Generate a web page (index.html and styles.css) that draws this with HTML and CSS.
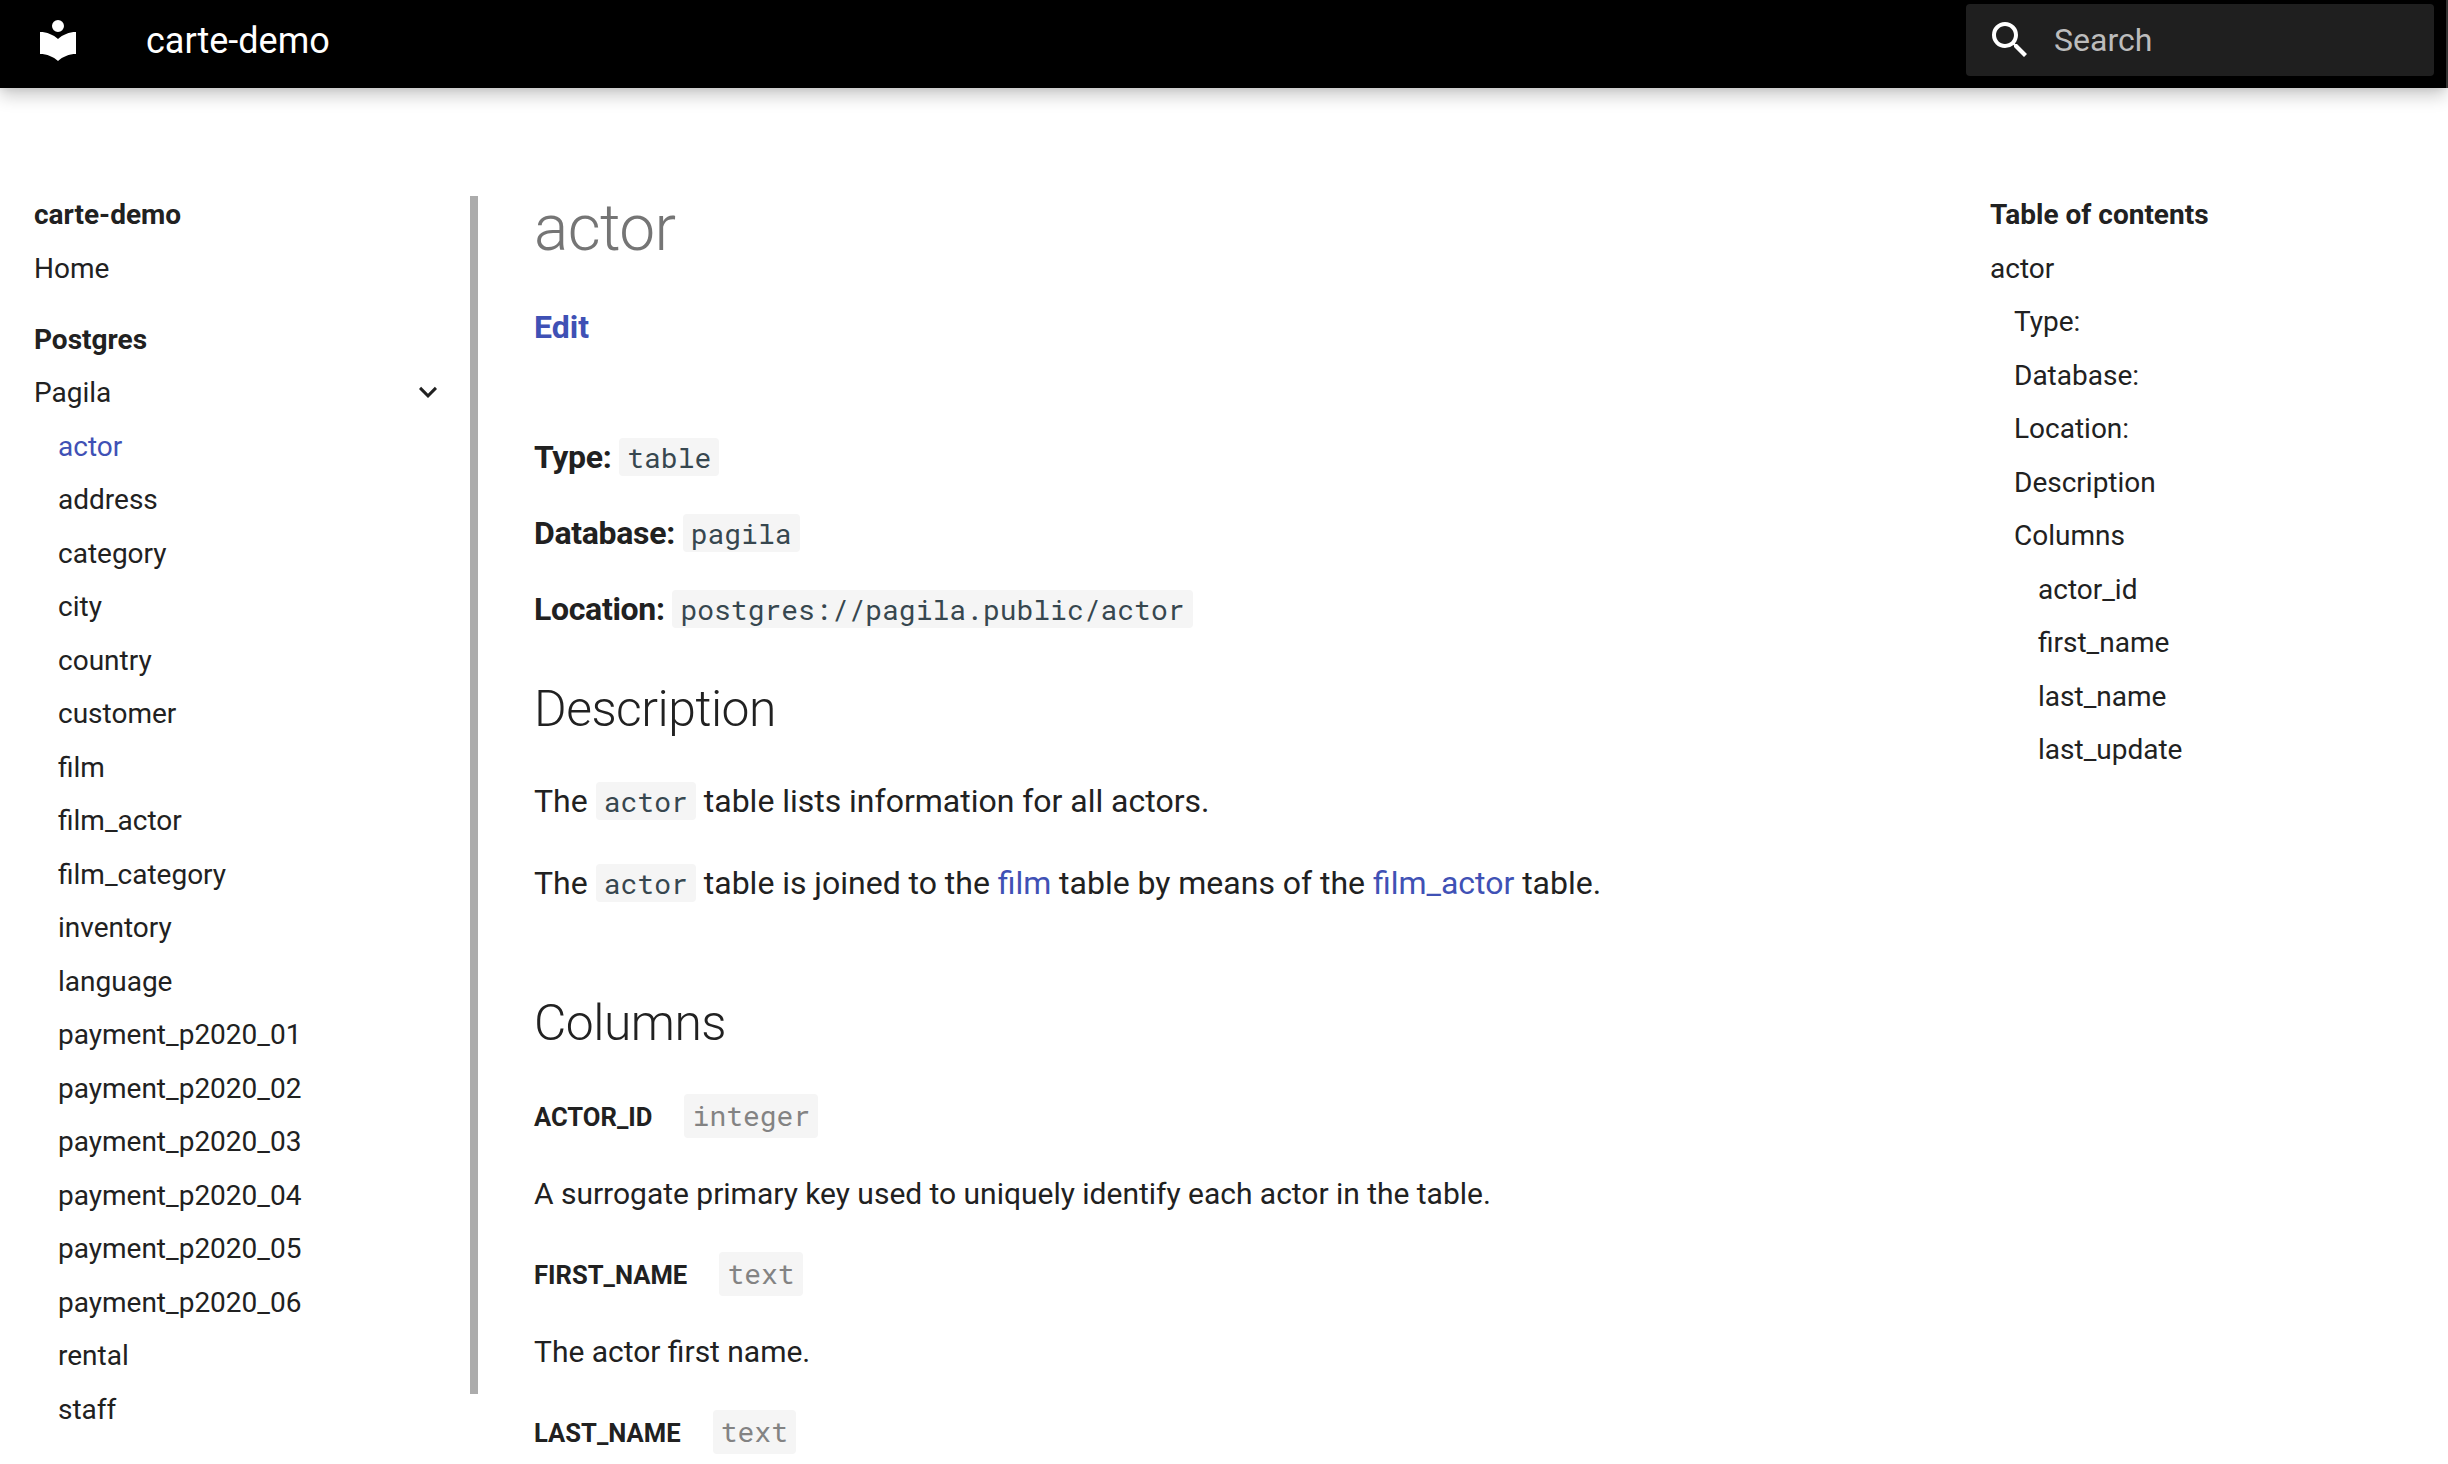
FILE: index.html
```html
<!DOCTYPE html>
<html lang="en">
<head>
<meta charset="utf-8">
<title>actor - carte-demo</title>
<link rel="stylesheet" href="styles.css">
</head>
<body>
<div class="top">
  <header class="header">
    <svg class="icon" viewBox="0 0 24 24"><path d="M12 8a3 3 0 0 0 3-3 3 3 0 0 0-3-3 3 3 0 0 0-3 3 3 3 0 0 0 3 3m0 3.54C9.64 9.35 6.5 8 3 8v11c3.5 0 6.64 1.35 9 3.54 2.36-2.19 5.5-3.54 9-3.54V8c-3.5 0-6.64 1.35-9 3.54Z"/></svg>
    <span class="header-title">carte-demo</span>
    <div class="search">
      <svg class="icon" viewBox="0 0 24 24"><path d="M9.5 3A6.5 6.5 0 0 1 16 9.5c0 1.61-.59 3.09-1.56 4.23l.27.27h.79l5 5-1.5 1.5-5-5v-.79l-.27-.27A6.516 6.516 0 0 1 9.5 16 6.5 6.5 0 0 1 3 9.5 6.5 6.5 0 0 1 9.5 3m0 2C7 5 5 7 5 9.5S7 14 9.5 14 14 12 14 9.5 12 5 9.5 5Z"/></svg>
      <span class="search-label">Search</span>
    </div>
  </header>
  <div class="top-edge"></div>
</div>
<div class="page">
  <nav class="sidebar">
    <ul class="nav">
      <li class="nav-title">carte-demo</li>
      <li class="nav-home">Home</li>
      <li class="nav-title nav-section">Postgres</li>
      <li class="nav-toggle"><span>Pagila</span><svg class="chevron" viewBox="0 0 24 24"><path d="M7.41 8.58 12 13.17l4.59-4.59L18 10l-6 6-6-6 1.41-1.42Z"/></svg></li>
      <li class="level-2 active">actor</li>
      <li class="level-2">address</li>
      <li class="level-2">category</li>
      <li class="level-2">city</li>
      <li class="level-2">country</li>
      <li class="level-2">customer</li>
      <li class="level-2">film</li>
      <li class="level-2">film_actor</li>
      <li class="level-2">film_category</li>
      <li class="level-2">inventory</li>
      <li class="level-2">language</li>
      <li class="level-2">payment_p2020_01</li>
      <li class="level-2">payment_p2020_02</li>
      <li class="level-2">payment_p2020_03</li>
      <li class="level-2">payment_p2020_04</li>
      <li class="level-2">payment_p2020_05</li>
      <li class="level-2">payment_p2020_06</li>
      <li class="level-2">rental</li>
      <li class="level-2">staff</li>
    </ul>
    <div class="scrollbar"></div>
  </nav>
  <main class="content">
    <h1>actor</h1>
    <p class="edit"><a>Edit</a></p>
    <h4 class="first">Type: <code>table</code></h4>
    <h4>Database: <code>pagila</code></h4>
    <h4>Location: <code>postgres://pagila.public/actor</code></h4>
    <h2>Description</h2>
    <p class="lead">The <code>actor</code> table lists information for all actors.</p>
    <p>The <code>actor</code> table is joined to the <a>film</a> table by means of the <a>film_actor</a> table.</p>
    <h2 class="columns">Columns</h2>
    <div class="column first"><h5>actor_id</h5><span class="type">integer</span></div>
    <p class="note">A surrogate primary key used to uniquely identify each actor in the table.</p>
    <div class="column"><h5>first_name</h5><span class="type">text</span></div>
    <p class="note">The actor first name.</p>
    <div class="column"><h5>last_name</h5><span class="type">text</span></div>
  </main>
  <aside class="toc">
    <ul class="nav">
      <li class="nav-title">Table of contents</li>
      <li>actor</li>
      <li class="level-2">Type:</li>
      <li class="level-2">Database:</li>
      <li class="level-2">Location:</li>
      <li class="level-2">Description</li>
      <li class="level-2">Columns</li>
      <li class="level-3">actor_id</li>
      <li class="level-3">first_name</li>
      <li class="level-3">last_name</li>
      <li class="level-3">last_update</li>
    </ul>
  </aside>
</div>
</body>
</html>
```
FILE: styles.css
```css
* { box-sizing: border-box; }
body {
  margin: 0;
  height: 1464px;
  overflow: hidden;
  background: #fff;
  color: #212121;
  font-family: Roboto, "Liberation Sans", sans-serif;
  font-size: 32px;
}
h1, h2, h4, h5, p, ul { margin: 0; padding: 0; }
ul { list-style: none; }
a { color: #3f51b5; }

.top { display: flex; height: 88px; }
.header {
  flex: 1;
  display: flex;
  align-items: flex-start;
  padding: 4px 12px 0 34px;
  background: #000;
  color: #fff;
  box-shadow: 0 0 8px rgba(0, 0, 0, .1), 0 8px 16px rgba(0, 0, 0, .2);
}
.top-edge { width: 2px; background: #333; }
.icon { width: 48px; height: 48px; margin-top: 12px; fill: #fff; }
.header-title { margin-left: 64px; font-size: 36px; line-height: 74px; }
.search {
  display: flex;
  width: 468px;
  height: 72px;
  margin-left: auto;
  padding-left: 20px;
  border-radius: 4px;
  background: #1f1f1f;
}
.search-label { margin-left: 20px; line-height: 72px; color: #bcbcbc; }

.page { display: flex; padding-top: 108px; }
.sidebar { display: flex; width: 478px; height: 1268px; }
.sidebar .nav { flex: 1; padding: .5px 0 0 34px; }
.scrollbar { width: 8px; height: 1198px; background: #acacac; }
.nav { font-size: 28px; line-height: 36px; }
.nav li + li { margin-top: 17.5px; }
.nav .nav-title { font-weight: 700; }
.nav li.nav-home { margin-top: 18px; }
.nav li.nav-section { margin-top: 35px; }
.nav-toggle { display: flex; justify-content: space-between; padding-right: 24px; }
.chevron { width: 36px; height: 36px; margin-top: -1px; fill: #212121; }
.level-2 { padding-left: 24px; }
.level-3 { padding-left: 48px; }
.active { color: #3f51b5; }

.content { flex: 1; padding-left: 56px; margin-top: -9px; line-height: 52px; }
.toc { width: 458px; padding-top: 1px; }
h1, h2 { font-weight: 300; letter-spacing: -.01em; }
h1 { color: #757575; font-size: 64px; line-height: 84px; }
h2 { margin-top: 39px; font-size: 49.8px; line-height: 70px; }
h2.columns { margin-top: 79px; }
h4 { margin-top: 24px; font-size: 32px; letter-spacing: -.01em; }
h4.first { margin-top: 78px; }
.content p { margin-top: 30px; word-spacing: -.1px; }
.content p.lead { margin-top: 31px; }
.edit { font-weight: 700; }
code, .type { font-family: "Roboto Mono", "Noto Sans Mono", "Liberation Mono", monospace; font-size: 28px; border-radius: 4px; background: #f5f5f5; }
code { padding: 1px 8.2px 0; color: #37474f; font-weight: 400; letter-spacing: 0; line-height: 1; }
.column { display: flex; align-items: baseline; gap: 32px; margin-top: 34px; }
.column.first { margin-top: 36px; }
h5 { font-size: 25.6px; line-height: 34px; text-transform: uppercase; }
.type { padding: 0 8.2px; line-height: 44px; color: #838383; }
.content p.note { margin-top: 31px; font-size: 30px; line-height: 49px; }
```
